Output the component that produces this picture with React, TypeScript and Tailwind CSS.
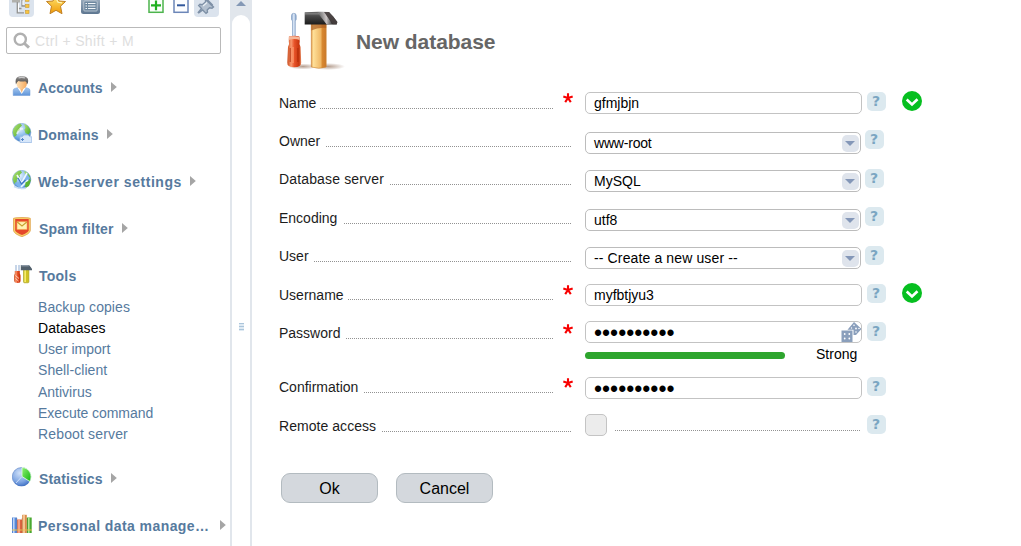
import React from "react";

type MenuEntry = {
  label: string;
  icon: React.ReactNode;
  spacing: string;
  arrow?: boolean;
};

const Sheet = ({ children, className = "" }: { children: React.ReactNode; className?: string }) => (
  <svg viewBox="0 0 20 20" className={`block h-5 w-5 shrink-0 ${className}`}>
    {children}
  </svg>
);

const Defs = () => (
  <svg width="0" height="0" className="absolute">
    <defs>
      <linearGradient id="steel" x1="0" y1="0" x2="0" y2="1">
        <stop offset="0" stopColor="#9fb0c1" />
        <stop offset="1" stopColor="#5d7690" />
      </linearGradient>
      <linearGradient id="gold" x1="0" y1="0" x2="0" y2="1">
        <stop offset="0" stopColor="#ffe873" />
        <stop offset="1" stopColor="#f09a08" />
      </linearGradient>
      <radialGradient id="globe" cx="0.4" cy="0.3" r="0.75">
        <stop offset="0" stopColor="#e3f2fd" />
        <stop offset="0.6" stopColor="#7ab2e8" />
        <stop offset="1" stopColor="#3a72c2" />
      </radialGradient>
      <linearGradient id="land" x1="0" y1="0" x2="1" y2="1">
        <stop offset="0" stopColor="#b9e573" />
        <stop offset="1" stopColor="#45a82a" />
      </linearGradient>
      <linearGradient id="shirt" x1="0" y1="0" x2="0" y2="1">
        <stop offset="0" stopColor="#a9caf0" />
        <stop offset="1" stopColor="#5f94d8" />
      </linearGradient>
      <linearGradient id="face" x1="0" y1="0" x2="1" y2="0">
        <stop offset="0" stopColor="#ffe0b4" />
        <stop offset="1" stopColor="#f5a95e" />
      </linearGradient>
      <linearGradient id="hair" x1="0" y1="0" x2="0" y2="1">
        <stop offset="0" stopColor="#8f8f8f" />
        <stop offset="1" stopColor="#4c4642" />
      </linearGradient>
      <linearGradient id="redHandle" x1="0" y1="0" x2="1" y2="0">
        <stop offset="0" stopColor="#c94a1c" />
        <stop offset="0.28" stopColor="#f99a70" />
        <stop offset="0.5" stopColor="#e8542a" />
        <stop offset="0.85" stopColor="#c7350d" />
        <stop offset="1" stopColor="#e99267" />
      </linearGradient>
      <linearGradient id="wood" x1="0" y1="0" x2="1" y2="0">
        <stop offset="0" stopColor="#d98d3a" />
        <stop offset="0.12" stopColor="#ffe19a" />
        <stop offset="0.65" stopColor="#efb765" />
        <stop offset="0.72" stopColor="#d98a32" />
        <stop offset="1" stopColor="#c9772a" />
      </linearGradient>
      <linearGradient id="iron" x1="0" y1="0" x2="0" y2="1">
        <stop offset="0" stopColor="#6b6b6b" />
        <stop offset="0.4" stopColor="#454545" />
        <stop offset="1" stopColor="#1c1c1c" />
      </linearGradient>
      <linearGradient id="glint" x1="0" y1="0" x2="1" y2="0">
        <stop offset="0" stopColor="#ddd" stopOpacity="0" />
        <stop offset="0.6" stopColor="#e5dede" stopOpacity="0.85" />
        <stop offset="1" stopColor="#ddd" stopOpacity="0.1" />
      </linearGradient>
      <linearGradient id="blade" x1="0" y1="0" x2="1" y2="0">
        <stop offset="0" stopColor="#7c9cc6" />
        <stop offset="0.5" stopColor="#e4eefb" />
        <stop offset="1" stopColor="#6f90bd" />
      </linearGradient>
      <radialGradient id="shade">
        <stop offset="0" stopColor="#8d6a54" stopOpacity="0.65" />
        <stop offset="1" stopColor="#8d6a54" stopOpacity="0" />
      </radialGradient>
      <radialGradient id="pie" cx="0.4" cy="0.3" r="0.8">
        <stop offset="0" stopColor="#cfe0f8" />
        <stop offset="0.6" stopColor="#7ea5e2" />
        <stop offset="1" stopColor="#2f63bd" />
      </radialGradient>
      <linearGradient id="slice" x1="0" y1="0" x2="1" y2="1">
        <stop offset="0" stopColor="#8df070" />
        <stop offset="1" stopColor="#11b40f" />
      </linearGradient>
    </defs>
  </svg>
);

const UserIcon = () => (
  <Sheet>
    <path d="M1.200 19.500v-5q0-2 2.500-2.300l3-.7h6l3 .7q2.300.5 2.300 2.300v5z" fill="url(#shirt)" stroke="#6a98d6" strokeWidth=".5" />
    <path d="M5.500 11.500l4.200 6.500 4.200-6.500z" fill="#fff" />
    <path d="M7.500 11h4.500l-2.300 6z" fill="#f6b878" />
    <ellipse cx="9.700" cy="7.600" rx="5.200" ry="5.600" fill="url(#face)" />
    <path d="M3.900 8Q2.300 1 8.200.3q8.300-1 8 4.800 0 2-1.200 3.400-.3-2.600-1.800-3.200-3.500.6-6.900-.4Q4.700 6 3.900 8.500z" fill="url(#hair)" />
    <path d="M6.500 2q3-1.400 6.500 0" stroke="#c9c9c9" strokeWidth="1.200" fill="none" />
  </Sheet>
);

const Globe = () => (
  <>
    <circle cx="9.700" cy="9.500" r="9.200" fill="url(#globe)" stroke="#7fa8cf" strokeWidth=".5" />
    <path d="M1.500 6Q4 1.200 8.500.6l1.500 2-2.500 2.500.5 2-3 2.200-.5 3L2.500 14Q-.2 10 1.500 6z" fill="url(#land)" />
    <path d="M12 1q5.500 1.500 6.500 7.500l-1.800 3-3.200-1.300-1.200-3.500L13.500 5z" fill="url(#land)" />
  </>
);

const DomainIcon = () => (
  <Sheet>
    <Globe />
    <path d="M5 11q2-6 6-5" stroke="#fff" strokeOpacity=".6" strokeWidth="2" fill="none" />
    <path d="M8 13.800h2l2-1.800h4l2 1.800h1.700v5.700H8z" fill="#d7e7fa" stroke="#9dbde6" strokeWidth=".8" />
    <path d="M9 16.500h3M10.500 15v3" stroke="#5687cb" strokeWidth="1" />
  </Sheet>
);

const WebIcon = () => (
  <Sheet>
    <Globe />
    <path d="M3 12q5 3 12-8l3 4q-5 8-8 10-5 0-7-6z" fill="#7db3ec" />
    <path d="M5 5l4.500 8L15 3M9 17l7-7" stroke="#eef7ff" strokeWidth="1.700" fill="none" />
    <path d="M6 8l3.500 6 4-4" stroke="#3d77c5" strokeWidth="1.300" fill="none" />
    <path d="M13.500 12.500l5.500-3-2 6.500-4 2z" fill="#5cb531" />
    <path d="M2 16.500q6 3 12 1.500" stroke="#c8def5" strokeWidth="1.500" fill="none" />
  </Sheet>
);

const SpamIcon = () => (
  <Sheet>
    <path d="M1.500 1.300L4 .8 10 .5l6 .3 2.300.5v12.400q-.8 3.300-8.400 6-7.500-2.700-8.400-6z" fill="#f9cf68" stroke="#dea14a" strokeWidth=".8" />
    <path d="M3.200 2h13.500v11.500q-1 2.400-6.700 4.500-5.700-2.100-6.800-4.500z" fill="#e5482a" />
    <rect x="5" y="4.800" width="10" height="7.500" fill="#fff3b4" stroke="#f7b35a" strokeWidth=".7" />
    <path d="M5.200 5l4.800 4 4.800-4" stroke="#c8a22e" strokeWidth="1.100" fill="none" />
  </Sheet>
);

const ToolsIcon = () => (
  <Sheet>
    <path d="M4 1v6.500M7 1v6.500" stroke="#a9bfdc" strokeWidth="1.300" />
    <path d="M2.800 7h5v2.500l1 2v5q0 2.500-3.300 2.500t-3.400-2.500v-5l.7-2z" fill="url(#redHandle)" />
    <path d="M3.500 11.500l3.500 3M3.500 14.500l3 2.500" stroke="#ffd4c4" strokeWidth=".9" />
    <rect x="11.500" y="5.500" width="5.400" height="13.300" rx="1" fill="#cfc322" stroke="#a39a17" strokeWidth=".6" />
    <path d="M13.200 6v12" stroke="#f7ee73" strokeWidth="1.500" />
    <path d="M8.800 1H17l3 3.800v1.400H8.800z" fill="#52606c" />
    <path d="M9.300 1.800h7.500" stroke="#a3b0bd" strokeWidth="1" />
  </Sheet>
);

const StatsIcon = () => (
  <Sheet>
    <circle cx="9.500" cy="9.800" r="9.300" fill="url(#pie)" stroke="#4673bd" strokeWidth=".5" />
    <path d="M10 9.500V.5a9.300 9.300 0 0 1 7.800 14z" fill="url(#slice)" stroke="#e8ffe3" strokeWidth=".8" />
    <path d="M9.500 10L4 16" stroke="#dbe8fc" strokeWidth=".8" />
  </Sheet>
);

const BooksIcon = () => (
  <Sheet>
    <rect x="0" y="3.500" width="5" height="15.500" fill="#5688d8" />
    <path d="M1.800 3.500v15.500" stroke="#c3d9fa" strokeWidth="1.500" />
    <rect x="5.200" y="5.500" width="4.800" height="13.500" fill="#dc6340" />
    <path d="M7 5.500v13.500" stroke="#ffb49a" strokeWidth="1.500" />
    <rect x="10.200" y="0.800" width="4.600" height="18.200" fill="#d98b46" />
    <path d="M12 .8v18.200" stroke="#fbd3a4" strokeWidth="1.600" />
    <rect x="15" y="3.500" width="4.700" height="15.500" fill="#4aa831" />
    <path d="M16.800 3.500v15.500" stroke="#b4eb9a" strokeWidth="1.500" />
    <path d="M0 16h20" stroke="#e7c457" strokeWidth="1" />
    <path d="M5 4v15M10.100 4v15M14.900 4v15" stroke="#8b4a26" strokeOpacity=".5" strokeWidth=".5" />
  </Sheet>
);

const BigTools = () => (
  <svg viewBox="0 0 60 62" className="block h-[62px] w-[60px] shrink-0">
    <ellipse cx="17" cy="56.500" rx="15" ry="3" fill="url(#shade)" />
    <ellipse cx="42" cy="56.500" rx="17" ry="3.500" fill="url(#shade)" />
    <path d="M5.500 5.500q0-2.200 2.300-2.200T10.200 5.500v4l-.9 1.500V28H6.500V11l-1-1.500z" fill="url(#blade)" stroke="#7d9ac0" strokeWidth=".6" />
    <path d="M2.900 26.500q5-1.400 10.500 0l.4 5q-1 2.300.8 5.500l.6 15.500q.3 4.700-7 4.700T1.300 52.500L2 37q1.800-3 .8-5.500z" fill="url(#redHandle)" />
    <path d="M3 27q5-1.500 10.300 0l.3 3q-5.300-2-10.800 0z" fill="#f5b79a" />
    <path d="M4.300 38v14M11.800 38v14" stroke="#a92605" strokeOpacity=".55" strokeWidth="1.400" />
    <path d="M7 37v16" stroke="#ff9a6e" strokeWidth="1.200" />
    <path d="M25.300 13.500h14.900V57q-7.300 2.500-14.900 0z" fill="url(#wood)" stroke="#cf8a3a" strokeWidth=".6" />
    <path d="M25.300 13.500h14.900v4.500q-8-.8-14.900 2.500z" fill="#a95c22" fillOpacity=".7" />
    <path d="M18.700 2.300q12-1 24.300-.2 4.500 4.400 8.300 10l-.6 2.400H18.700z" fill="url(#iron)" />
    <path d="M31 2h7.500l8 12.300h-6z" fill="url(#glint)" />
    <path d="M43 2.100q4.500 4.400 8.300 10l-.5 2.200h-4L38 2z" fill="#4b4242" fillOpacity=".8" />
    <path d="M19 3.800h14" stroke="#999" strokeOpacity=".5" strokeWidth="1.500" />
  </svg>
);

const TreeIcon = () => (
  <svg viewBox="0 0 25 17" className="block h-[17px] w-[25px]">
    <rect x="3" y="0" width="8" height="2.500" fill="#b0b0ac" />
    <path d="M8.300 2v10.800H15M13 0v6h3M8.500 8.500h4" stroke="#929290" strokeWidth="1.300" fill="none" />
    <path d="M9.500 3.500v8M14 .5v4.500" stroke="#fff" strokeWidth="1" fill="none" />
    <g fill="#f9c53f" stroke="#c99a35" strokeWidth=".6">
      <rect x="16.500" y="-1" width="3.500" height="2.300" />
      <rect x="16.500" y="4.500" width="3.500" height="3" />
      <rect x="16.500" y="10.500" width="3.500" height="3" />
    </g>
  </svg>
);

const StarIcon = () => (
  <svg viewBox="0 0 20 17" className="block h-[17px] w-5">
    <path d="M10-5l3 6 6.500.5-5 4.700 1.500 7.500-6-3.400-6 3.400 1.500-7.500-5-4.700L7 1z" fill="url(#gold)" stroke="#c07f22" strokeWidth="1" />
    <path d="M10-2l2 4.300 4 .5" stroke="#fff6b6" strokeWidth="1.200" fill="none" />
  </svg>
);

const ListIcon = () => (
  <svg viewBox="0 0 19 17" className="block h-[17px] w-[19px]">
    <path d="M0-2h19v13.500q0 2.500-2.500 2.500h-14Q0 14 0 11.500z" fill="url(#steel)" />
    <rect x="2.800" y="1" width="13.400" height="10" rx="1" fill="#6e889f" stroke="#c6d1db" strokeWidth=".8" />
    <path d="M4.500 3.500h1.500m1 0h7.500M4.500 6h1.500m1 0h7.500M4.500 8.500h1.500m1 0h7.500" stroke="#f2f6f9" strokeWidth="1.100" />
  </svg>
);

const PlusIcon = () => (
  <svg viewBox="0 0 16 14" className="block h-3.5 w-4">
    <rect x="1" y="-3" width="14" height="15.300" fill="#fafffa" stroke="#4db44d" strokeWidth="1.500" />
    <path d="M3 5.300h10M8 .5v9.800" stroke="#1fb01f" strokeWidth="2.200" />
  </svg>
);

const MinusIcon = () => (
  <svg viewBox="0 0 16 14" className="block h-3.5 w-4">
    <rect x="1" y="-3" width="14" height="15.300" fill="#fcfdff" stroke="#6c86b8" strokeWidth="1.500" />
    <path d="M4 5.300h8" stroke="#32589c" strokeWidth="2" />
  </svg>
);

const PinIcon = () => (
  <svg viewBox="0 0 25 17" className="block h-[17px] w-[25px]">
    <path d="M11.500-1l8 8-1.500 1.300-2.500-.5-2.300 2.300.3 2-1.500 1.300L8.700 10 4.800 12.900l-.5-.4L7.500 8.500 4.700 5.500 6 4.300l2.200.4L11.500 2z" fill="#b3c0cf" stroke="#7e90a6" strokeWidth="1.400" />
    <path d="M13 0l5.500 5.500" stroke="#7e90a6" strokeWidth="2.200" />
    <path d="M9 6l4-3.500" stroke="#e9eff5" strokeWidth="1.200" />
  </svg>
);

const groupsTop: MenuEntry[] = [
  { label: "Accounts", icon: <UserIcon />, spacing: "tracking-[0.120px]", arrow: true },
  { label: "Domains", icon: <DomainIcon />, spacing: "tracking-[0.220px]", arrow: true },
  { label: "Web-server settings", icon: <WebIcon />, spacing: "tracking-[0.540px]", arrow: true },
  { label: "Spam filter", icon: <SpamIcon />, spacing: "pl-px tracking-[0.220px]", arrow: true },
  { label: "Tools", icon: <ToolsIcon />, spacing: "pl-px tracking-[0.250px]" },
];

const groupsBottom: MenuEntry[] = [
  { label: "Statistics", icon: <StatsIcon />, spacing: "pl-px tracking-[0.140px]", arrow: true },
  { label: "Personal data manage…", icon: <BooksIcon />, spacing: "tracking-[0.420px]", arrow: true },
];

const toolPages = [
  { label: "Backup copies", height: "h-[21px]", track: "tracking-[0.070px]" },
  { label: "Databases", height: "h-[21px]", track: "tracking-[0.070px]", current: true },
  { label: "User import", height: "h-[21px]", track: "" },
  { label: "Shell-client", height: "h-[22px]", track: "tracking-[0.060px]" },
  { label: "Antivirus", height: "h-[21px]", track: "" },
  { label: "Execute command", height: "h-[21px]", track: "tracking-[-0.050px]" },
  { label: "Reboot server", height: "h-[21px]", track: "tracking-[0.150px]" },
];

const MenuGroup = ({ entry }: { entry: MenuEntry }) => (
  <div className="flex h-[47px] items-start pl-3 pr-1">
    {entry.icon}
    <span className={`ml-1.5 mt-[3px] whitespace-nowrap text-[14px] font-bold leading-[18px] text-[#567a9e] ${entry.spacing}`}>
      {entry.label}
    </span>
    {entry.arrow && (
      <svg viewBox="0 0 6 10" className={`mt-1.5 h-2.5 w-1.5 shrink-0 ${entry.label.startsWith("Personal") ? "ml-auto" : "ml-2"}`}>
        <path d="M0 0l5.800 5L0 10z" fill="#a5a5a5" />
      </svg>
    )}
  </div>
);

const Sidebar = () => (
  <aside className="flex w-[230px] shrink-0 flex-col overflow-hidden">
    <div className="flex h-[17px] items-start pl-[9px]">
      <div className="h-[17px] w-[25px] rounded-b bg-[#dbe3ed]"><TreeIcon /></div>
      <div className="ml-3"><StarIcon /></div>
      <div className="ml-[15px]"><ListIcon /></div>
      <div className="ml-12"><PlusIcon /></div>
      <div className="ml-[9px]"><MinusIcon /></div>
      <div className="ml-[5px] h-[17px] w-[25px] rounded-b bg-[#dbe3ed]"><PinIcon /></div>
    </div>
    <div className="ml-1.5 mt-2.5 flex h-[27px] w-[215px] shrink-0 items-center rounded-[2px] border border-[#b9b9b9] pl-1.5">
      <svg viewBox="0 0 18 18" className="h-[18px] w-[18px]">
        <circle cx="7.300" cy="7.300" r="5.600" fill="none" stroke="#b0b0b0" strokeWidth="2.400" />
        <path d="M11.500 11.500l4.500 4.200" stroke="#b0b0b0" strokeWidth="3" />
      </svg>
      <span className="ml-1 text-[14px] leading-[18px] tracking-[0.350px] text-[#dedede]">Ctrl + Shift + M</span>
    </div>
    <nav className="mt-[22px]">
      {groupsTop.map((g) => <MenuGroup key={g.label} entry={g} />)}
      <ul className="-mt-3.5 h-[170px] pl-[38px]">
        {toolPages.map((p) => (
          <li key={p.label} className={`${p.height} ${p.track} text-[14px] leading-[21px] ${p.current ? "text-black" : "text-[#567a9e]"}`}>
            {p.label}
          </li>
        ))}
      </ul>
      {groupsBottom.map((g) => <MenuGroup key={g.label} entry={g} />)}
    </nav>
  </aside>
);

const Splitter = () => (
  <div className="flex w-[22px] shrink-0 flex-col bg-[#e1e6ec]">
    <svg viewBox="0 0 22 15" className="h-[15px] w-[22px] shrink-0">
      <path d="M6 6l5-5 5 5z" fill="#8498b5" />
    </svg>
    <div className="mx-0.5 flex grow flex-col items-center rounded-t-[9px] bg-white pt-[308px]">
      <div className="flex h-2 w-[5px] flex-col gap-px bg-[#dfeaf3]">
        <i className="h-px bg-[#abc5db]" />
        <i className="mt-px h-px bg-[#abc5db]" />
        <i className="mt-px h-px bg-[#abc5db]" />
      </div>
    </div>
  </div>
);

const Dots = ({ className = "" }: { className?: string }) => (
  <span className={`h-px bg-[repeating-linear-gradient(90deg,#929292_0_1px,transparent_1px_2px)] ${className}`} />
);

const Dice = () => (
  <svg viewBox="0 0 20 20" className="h-5 w-5">
    <path d="M13 0L20 6.500v1l-5 5.500h-2.500V7.800H6.500z" fill="#8a9fbc" />
    <rect x="0.500" y="8.500" width="11" height="11.500" fill="#8a9fbc" />
    <g fill="#fff">
      <circle cx="13" cy="3.200" r=".8" />
      <circle cx="10.500" cy="6" r=".7" />
      <circle cx="15" cy="6.500" r=".9" />
      <circle cx="18" cy="6.500" r=".8" />
      <circle cx="15" cy="10" r=".8" />
      <circle cx="3.700" cy="12" r=".9" />
      <circle cx="8.300" cy="12" r=".9" />
      <circle cx="3.700" cy="16.500" r=".9" />
      <circle cx="8.300" cy="16.500" r=".9" />
    </g>
  </svg>
);

type Field = {
  label: string;
  kind: "text" | "select" | "password" | "check";
  value?: string;
  required?: boolean;
  valid?: boolean;
  dice?: boolean;
  meter?: boolean;
  row: string;
  control: string;
  help: string;
  text?: string;
  line: string;
  star?: string;
  tick?: string;
  valueTrack?: string;
};

const fields: Field[] = [
  { label: "Name", kind: "text", value: "gfmjbjn", required: true, valid: true, row: "h-[38px]", control: "mt-0.5", help: "mt-0.5", line: "w-[233px]", star: "mt-[3px]", tick: "mt-px" },
  { label: "Owner", kind: "select", value: "www-root", row: "h-[38px]", control: "mt-1", help: "mt-0.5", line: "w-[245px]", valueTrack: "tracking-[-0.200px]" },
  { label: "Database server", kind: "select", value: "MySQL", row: "h-[39px]", control: "mt-1", help: "mt-[3px]", text: "tracking-[0.150px]", line: "w-[181px]" },
  { label: "Encoding", kind: "select", value: "utf8", row: "h-[38px]", control: "mt-1", help: "mt-0.5", line: "w-[227px]" },
  { label: "User", kind: "select", value: "-- Create a new user --", row: "h-[38px]", control: "mt-1", help: "mt-[3px]", line: "w-[257px]", valueTrack: "tracking-[0.130px]" },
  { label: "Username", kind: "text", value: "myfbtjyu3", required: true, valid: true, row: "h-[39px]", control: "mt-[3px]", help: "mt-[3px]", text: "pt-px", line: "w-[205px]", star: "mt-1", tick: "mt-0.5" },
  { label: "Password", kind: "password", required: true, dice: true, meter: true, row: "h-[54px]", control: "mt-px", help: "mt-0.5", line: "w-[207px]", star: "mt-1" },
  { label: "Confirmation", kind: "password", required: true, row: "h-[39px]", control: "mt-[3px]", help: "mt-[3px]", line: "w-[189px]", star: "mt-1" },
  { label: "Remote access", kind: "check", row: "h-[38px]", control: "mt-px", help: "mt-0.5", text: "tracking-[0.050px]", line: "w-[189px]" },
];

const Control = ({ field }: { field: Field }) => {
  if (field.kind === "check") {
    return (
      <div className="flex w-[277px]">
        <span className="h-[22px] w-[22px] rounded-[5px] border border-[#c4c4c4] bg-[#ececec]" />
        <Dots className="ml-2 mt-4 w-[245px]" />
      </div>
    );
  }
  if (field.kind === "select") {
    return (
      <div className="flex h-[22px] w-[276px] items-center justify-between rounded-[5px] border border-[#bcbcbc] pl-2 pr-px">
        <span className={`text-[14px] leading-5 text-black ${field.valueTrack ?? ""}`}>{field.value}</span>
        <span className="flex h-[17px] w-[17px] items-center justify-center rounded-[5px] bg-[#dfe4ec] pr-px">
          <svg viewBox="0 0 10 5" className="mt-px h-[5px] w-2.5"><path d="M0 0h10L5 5z" fill="#8497b8" /></svg>
        </span>
      </div>
    );
  }
  return (
    <div>
      <div className="flex h-[22px] w-[277px] items-center justify-between rounded-[5px] border border-[#c3c3c3] pl-2">
        {field.kind === "password" ? (
          <span className="pt-0.5 text-[23px] leading-5 text-black">••••••••••</span>
        ) : (
          <span className="text-[14px] leading-5 text-black">{field.value}</span>
        )}
        {field.dice && <Dice />}
      </div>
      {field.meter && (
        <div className="flex items-start">
          <span className="mt-[9px] h-[7px] w-[200px] rounded-full bg-[#2ea52e]" />
          <span className="ml-[31px] mt-0.5 text-[14px] leading-[18px] text-black">Strong</span>
        </div>
      )}
    </div>
  );
};

const FieldRow = ({ field }: { field: Field }) => (
  <div className={`flex items-start ${field.row}`}>
    <div className="flex w-[306px] shrink-0 items-start">
      <span className={`mt-1 grow whitespace-nowrap text-[14px] leading-[18px] text-[#1c1c1c] ${field.text ?? ""}`}>{field.label}</span>
      <Dots className={`mt-[18px] shrink-0 ${field.required ? "" : "mr-3.5"} ${field.line}`} />
      {field.required && (
        <svg viewBox="0 0 10 10" className={`ml-2.5 mr-3 h-2.5 w-2.5 shrink-0 ${field.star ?? ""}`}>
          <path d="M5 5V.2M5 5L.3 3.500M5 5l4.700-1.500M5 5L2.200 9.200M5 5l2.800 4.200" stroke="#f80000" strokeWidth="2.100" />
        </svg>
      )}
    </div>
    <div className={`shrink-0 ${field.control}`}><Control field={field} /></div>
    <span
      className={`flex h-[19px] w-[19px] shrink-0 justify-center rounded-[5px] bg-[#dce9ef] pr-px font-['DejaVu_Sans',sans-serif] text-[14px] font-bold leading-[18px] text-[#7ba6c2] ${field.kind === "select" ? "ml-1" : "ml-[5px]"} ${field.help}`}
    >
      ?
    </span>
    {field.valid && (
      <svg viewBox="0 0 20 20" className={`ml-4 h-5 w-5 shrink-0 ${field.tick ?? ""}`}>
        <circle cx="10" cy="10" r="10" fill="#06bf20" />
        <path d="M4.700 8.500l5.300 5 5.500-5.300" fill="none" stroke="#fff" strokeWidth="2.600" />
      </svg>
    )}
  </div>
);

const FormButton = ({ children }: { children: string }) => (
  <button className="h-[30px] w-[97px] rounded-[9px] border border-[#b3bbc0] bg-[#d4d8dd] pt-0.5 text-[16px] leading-[26px] text-black">
    {children}
  </button>
);

export default function App() {
  return (
    <div className="flex h-[546px] w-[1021px] overflow-hidden bg-white font-['Liberation_Sans',Arial,sans-serif]">
      <Defs />
      <Sidebar />
      <Splitter />
      <main className="flex grow flex-col pl-[27px]">
        <header className="flex h-[90px] items-start pl-[7px] pt-2.5">
          <BigTools />
          <h1 className="ml-2.5 mt-5 text-[21px] font-bold leading-6 tracking-[-0.050px] text-[#666]">New database</h1>
        </header>
        {fields.map((f) => <FieldRow key={f.label} field={f} />)}
        <div className="ml-0.5 mt-[22px] flex gap-[18px]">
          <FormButton>Ok</FormButton>
          <FormButton>Cancel</FormButton>
        </div>
      </main>
    </div>
  );
}
